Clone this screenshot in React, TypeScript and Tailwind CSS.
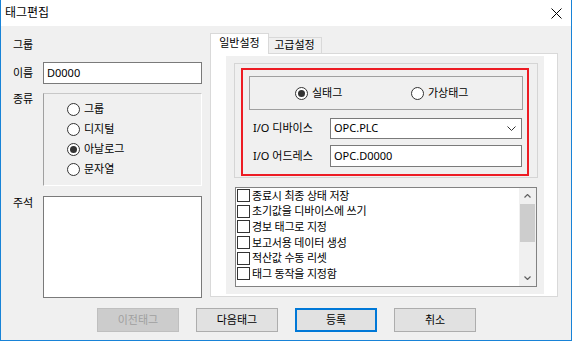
import React from 'react';

const CHECK_ITEMS = [
  '종료시 최종 상태 저장',
  '초기값을 디바이스에 쓰기',
  '경보 태그로 지정',
  '보고서용 데이터 생성',
  '적산값 수동 리셋',
  '태그 동작을 지정함',
];

function Radio({ checked, label }: { checked?: boolean; label: string }) {
  return (
    <div className="flex items-center gap-[4px]">
      <span className="w-[13px] h-[13px] rounded-full border border-[#333333] bg-white flex items-center justify-center shrink-0">
        {checked && <span className="w-[7px] h-[7px] rounded-full bg-[#333333]" />}
      </span>
      <span className="leading-[14px]">{label}</span>
    </div>
  );
}

function Button({ label, disabled, primary }: { label: string; disabled?: boolean; primary?: boolean }) {
  let cls = 'border border-[#adadad] bg-[#e1e1e1] text-black';
  if (disabled) cls = 'border border-[#bfbfbf] bg-[#cccccc] text-[#a0a0a0]';
  if (primary) cls = 'border-2 border-[#0078d7] bg-[#e1e1e1] text-black';
  return (
    <div className={`w-[82px] h-[24px] flex items-center justify-center ${cls}`}>
      {label}
    </div>
  );
}

export default function App() {
  return (
    <div className="w-[572px] h-[341px] flex flex-col bg-white border-l border-r border-b border-[#1883d7] text-[11px] text-black font-['Noto_Sans','Noto_Sans_CJK_KR',sans-serif]">
      {/* title bar */}
      <div className="h-[26px] flex items-center justify-between pl-[4px] pr-[9px] shrink-0">
        <span className="text-[12px]">태그편집</span>
        <svg width="11" height="11" viewBox="0 0 11 11">
          <path d="M0.5 0.5 L10.5 10.5 M10.5 0.5 L0.5 10.5" stroke="#000" strokeWidth="1" />
        </svg>
      </div>

      <div className="flex-1 bg-[#f0f0f0] flex flex-col">
        <div className="flex pt-[7px] pl-[12px]">
          {/* left column */}
          <div className="w-[189px] flex flex-col">
            <div className="mt-[4px] h-[16px] leading-[16px]">그룹</div>
            <div className="mt-[9px] flex items-center">
              <span className="w-[30px]">이름</span>
              <div className="w-[159px] h-[22px] border border-[#7a7a7a] bg-white pl-[3px] flex items-center">D0000</div>
            </div>
            <div className="mt-[9px] flex">
              <span className="w-[30px] h-[12px] leading-[12px]">종류</span>
              <div className="w-[159px] h-[93px] border border-t-[#c8c8c8] border-l-[#a0a0a0] border-r-white border-b-white pl-[23px] pt-[5px] flex flex-col">
                <div className="h-[20px] flex items-center"><Radio label="그룹" /></div>
                <div className="h-[20px] flex items-center"><Radio label="디지털" /></div>
                <div className="h-[20px] flex items-center"><Radio checked label="아날로그" /></div>
                <div className="h-[20px] flex items-center"><Radio label="문자열" /></div>
              </div>
            </div>
            <div className="mt-[10px] flex">
              <span className="w-[30px] h-[14px] leading-[14px]">주석</span>
              <div className="w-[159px] h-[102px] border border-[#7a7a7a] bg-white" />
            </div>
          </div>

          {/* right column: tabs */}
          <div className="ml-[8px] flex flex-col">
            <div className="flex items-end">
              <div className="relative z-10 -mb-[1px] w-[59px] h-[21px] bg-white border-t border-l border-r border-[#d9d9d9] flex justify-center pt-[2px] leading-[14px]">
                일반설정
              </div>
              <div className="w-[54px] h-[16px] -ml-[1px] border-t border-r border-[#d9d9d9] bg-[#f0f0f0] flex items-center justify-center">
                고급설정
              </div>
            </div>
            <div className="w-[348px] h-[244px] bg-white border border-[#d9d9d9] pl-[15px] pt-[2px]">
              <div className="w-[318px] h-[238px] bg-[#f0f0f0] flex flex-col">
                <div className="ml-[8px] mt-[7px] w-[304px] h-[115px] border border-[#d5d5d5] pl-[6px] pt-[4px]">
                  <div className="w-[288px] h-[108px] border-2 border-[#ed1c24] flex flex-col">
                    <div className="ml-[6px] mt-[6px] w-[274px] h-[34px] border border-[#a0a0a0] flex items-center pl-[45px]">
                      <div className="w-[116px]"><Radio checked label="실태그" /></div>
                      <Radio label="가상태그" />
                    </div>
                    <div className="ml-[10px] mt-[8px] flex items-center">
                      <span className="w-[77px]">I/O 디바이스</span>
                      <div className="w-[192px] h-[21px] border border-[#7a7a7a] bg-white pl-[3px] pr-[5px] flex items-center justify-between">
                        <span>OPC.PLC</span>
                        <svg width="9" height="5" viewBox="0 0 9 5">
                          <path d="M0.5 0.5 L4.5 4.5 L8.5 0.5" stroke="#333" strokeWidth="1" fill="none" />
                        </svg>
                      </div>
                    </div>
                    <div className="ml-[10px] mt-[6px] flex items-center">
                      <span className="w-[77px]">I/O 어드레스</span>
                      <div className="w-[192px] h-[22px] border border-[#7a7a7a] bg-white pl-[3px] flex items-center">OPC.D0000</div>
                    </div>
                  </div>
                </div>

                {/* check list */}
                <div className="ml-[9px] mt-[9px] w-[302px] h-[100px] border border-[#828282] bg-white flex">
                  <div className="flex-1 flex flex-col pl-[1px]">
                    {CHECK_ITEMS.map((item) => (
                      <div key={item} className="h-[15.6px] flex items-center gap-[2px] tracking-[-0.2px]">
                        <span className="w-[13px] h-[13px] border border-[#333333] bg-white shrink-0" />
                        <span className="leading-[14px]">{item}</span>
                      </div>
                    ))}
                  </div>
                  <div className="w-[17px] bg-[#f0f0f0] flex flex-col items-center">
                    <div className="h-[16px] flex items-center justify-center">
                      <svg width="7" height="4" viewBox="0 0 7 4">
                        <path d="M0.5 3.5 L3.5 0.5 L6.5 3.5" stroke="#606060" strokeWidth="1.2" fill="none" />
                      </svg>
                    </div>
                    <div className="w-[15px] h-[38px] bg-[#cdcdcd]" />
                    <div className="flex-1" />
                    <div className="h-[16px] flex items-center justify-center">
                      <svg width="7" height="4" viewBox="0 0 7 4">
                        <path d="M0.5 0.5 L3.5 3.5 L6.5 0.5" stroke="#606060" strokeWidth="1.2" fill="none" />
                      </svg>
                    </div>
                  </div>
                </div>
              </div>
            </div>
          </div>
        </div>

        {/* buttons */}
        <div className="mt-[10px] pl-[96px] flex gap-[17px]">
          <Button label="이전태그" disabled />
          <Button label="다음태그" />
          <Button label="등록" primary />
          <Button label="취소" />
        </div>
      </div>
    </div>
  );
}
